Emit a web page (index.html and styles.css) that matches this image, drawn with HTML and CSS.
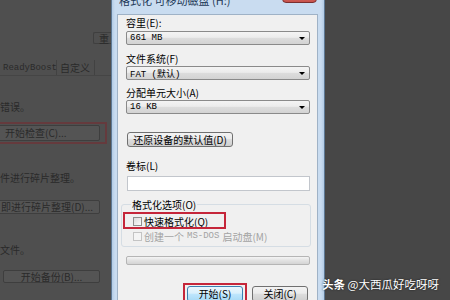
FILE: index.html
```html
<!DOCTYPE html>
<html lang="zh-CN">
<head>
    <meta charset="UTF-8">
    <title>格式化 可移动磁盘</title>
    <link rel="stylesheet" href="styles.css">
</head>
<body>
<div class="stage">

    <div class="behind">
        <div class="bBtnTop">重</div>
        <div class="bTabs">
            <div class="bTab mono">ReadyBoost</div>
            <div class="bTab">自定义</div>
        </div>
        <div class="bText t1">错误。</div>
        <div class="bBtn b1">开始检查(C)...</div>
        <div class="bText t2">件进行碎片整理。</div>
        <div class="bBtn b2">即进行碎片整理(D)...</div>
        <div class="bText t3">文件。</div>
        <div class="bBtn b3">开始备份(B)...</div>
    </div>

    <div class="dialog">
        <div class="titlebar">
            <div class="titleText">格式化 可移动磁盘 (H:)</div>
            <div class="closeBtn"></div>
        </div>
        <div class="panel">
            <div class="label l1">容里(E):</div>
            <div class="combo c1"><span class="mono">661 MB</span><span class="arrow"></span></div>
            <div class="label l2">文件系统(F)</div>
            <div class="combo c2"><span class="mono">FAT (默认)</span><span class="arrow"></span></div>
            <div class="label l3">分配单元大小(A)</div>
            <div class="combo c3"><span class="mono">16 KB</span><span class="arrow"></span></div>
            <div class="btn restore">还原设备的默认值(D)</div>
            <div class="label l4">卷标(L)</div>
            <div class="input"></div>
            <fieldset class="group">
                <legend>格式化选项(O)</legend>
                <div class="check"><span class="box"></span>快速格式化(Q)</div>
                <div class="check off"><span class="box"></span>创建一个 <span class="mono">MS-DOS</span> 启动盘(M)</div>
            </fieldset>
            <div class="progress"></div>
            <div class="actions">
                <div class="btn start">开始(S)</div>
                <div class="btn">关闭(C)</div>
            </div>
        </div>
    </div>

    <div class="rest"></div>

    <div class="mark markLeft"></div>
    <div class="mark markQuick"></div>
    <div class="mark markStart"></div>
    <div class="watermark"><b>头条</b> @大西瓜好吃呀呀</div>
</div>
</body>
</html>
```

FILE: styles.css
```css
*{
    margin:0;
    padding:0;
    box-sizing:border-box;
}

body{
    width:450px;
    height:300px;
    overflow:hidden;
    font-family:"Noto Sans CJK SC","Liberation Sans",sans-serif;
    font-size:10px;
}

.mono{
    font-family:"Liberation Mono","Noto Sans CJK SC",monospace;
    font-size:9px;
}

.stage{
    position:relative;
    display:flex;
    height:300px;
    background:#474747;
}

/* window behind the dialog, dimmed */
.behind{
    width:111px;
    flex-shrink:0;
    background:#4f4f4f;
    color:#2a2a2a;
    overflow:hidden;
    line-height:12px;
}
.bBtnTop{
    margin:32px 0 0 93px;
    width:18px;
    height:12px;
    padding-left:5px;
    border:1px solid #3f3f3f;
    border-right:0;
    border-radius:2px 0 0 2px;
    white-space:nowrap;
}
.bTabs{
    display:flex;
    margin-top:16px;
    height:16px;
    border-bottom:1px solid #454545;
}
.bTab{
    padding:2px 4px 0 3px;
    border-right:1px solid #424242;
    white-space:nowrap;
}
.bTab.mono{
    width:57px;
}
.bText{
    white-space:nowrap;
}
.t1{ margin-top:25px; }
.t2{ margin-top:31px; }
.t3{ margin-top:30px; }

.bBtn{
    margin-left:-5px;
    width:105px;
    border:1px solid #3e3e3e;
    border-radius:2px;
    background:#545454;
    white-space:nowrap;
    padding-left:9px;
}
.b1{ margin-top:12px; height:16px; padding-top:1px; }
.b2{ margin-top:16px; height:14px; padding-left:5px; }
.b3{ margin:14px 0 0 3px; width:97px; height:13px; text-align:center; padding-left:0; }

/* dialog */
.dialog{
    width:214px;
    flex-shrink:0;
    border-left:1px solid #5d7894;
    border-right:1px solid #5d7894;
    background:linear-gradient(90deg,#b3cce6,#c9dcf0 3px,#c9dcf0 calc(100% - 3px),#b3cce6);
    padding:0 6px 0 5px;
}
.titlebar{
    display:flex;
    justify-content:space-between;
    height:14px;
    overflow:hidden;
}
.titleText{
    margin:-6px 0 0 2px;
    font-size:11px;
    line-height:12px;
    color:#1e3957;
    white-space:nowrap;
}
.closeBtn{
    width:35px;
    height:14px;
    margin:-11px 1px 0 0;
    border:1px solid #7b2f2f;
    border-radius:0 0 4px 4px;
    background:linear-gradient(#e0918a,#c75049);
}

.panel{
    height:300px;
    border:1px solid #9fb2c6;
    background:#f0f0f0;
    padding:1px 7px 0 8px;
    color:#000;
}
.label{
    height:13px;
    line-height:13px;
    white-space:nowrap;
}
.l2{ margin-top:7px; }
.l3{ margin-top:6px; }
.l4{ margin-top:12px; }

.combo{
    display:flex;
    align-items:center;
    justify-content:space-between;
    height:14px;
    padding:0 4px 0 3px;
    border:1px solid #8a8a8a;
    border-radius:2px;
    background:linear-gradient(#f4f4f4,#ececec 45%,#dddddd 50%,#d3d3d3);
}
.c1{ margin-top:2px; }
.c2{ margin-top:1px; }
.c3{ margin-top:1px; }
.arrow{
    width:0;
    height:0;
    border-left:3px solid transparent;
    border-right:3px solid transparent;
    border-top:3px solid #000;
}

.btn{
    height:16px;
    line-height:14px;
    text-align:center;
    border:1px solid #707070;
    border-radius:3px;
    background:linear-gradient(#f3f3f3,#ebebeb 45%,#dddddd 50%,#cfcfcf);
    white-space:nowrap;
}
.restore{
    margin:18px 0 0 1px;
    width:106px;
    height:15px;
}

.input{
    margin:4px 0 0 1px;
    width:183px;
    height:15px;
    background:#fff;
    border:1px solid #c2c6cc;
}

.group{
    margin:8px -1px 0 -5px;
    padding:5px 4px 4px 9px;
    border:1px solid #d5dde4;
    border-radius:3px;
}
.group legend{
    padding:0 1px;
    line-height:11px;
}
.check{
    display:flex;
    align-items:center;
    height:12px;
    padding-left:2px;
    white-space:nowrap;
}
.check + .check{
    margin-top:3px;
}
.check .box{
    width:9px;
    height:9px;
    margin-right:2px;
    border:1px solid #8f8f8f;
    background:linear-gradient(135deg,#dcdcdc,#fbfbfb);
}
.check.off{
    color:#a3a3a3;
}
.check.off .box{
    border-color:#c4c4c4;
    background:#f4f4f4;
}
.check.off .mono{
    margin:0 3px;
}

.progress{
    margin-top:9px;
    height:9px;
    border:1px solid #b5b5b5;
    border-radius:2px;
    background:linear-gradient(#f4f4f4,#e2e2e2 50%,#d4d4d4);
}

.actions{
    display:flex;
    justify-content:flex-end;
    gap:9px;
    margin-top:21px;
    padding-right:2px;
}
.actions .btn{
    width:56px;
}
.actions .start{
    border-color:#3c7fb1;
    background:linear-gradient(#eaf6fd,#d9f0fc 45%,#bee6fd 50%,#a7d9f5);
}

.rest{
    flex:1;
}

/* highlights drawn over the screenshot */
.mark{
    position:absolute;
    border:2px solid #c5263a;
}
.markLeft{
    left:-2px;
    top:122px;
    width:109px;
    height:22px;
    border-color:#653a3d;
}
.markQuick{
    left:123px;
    top:212px;
    width:103px;
    height:17px;
}
.markStart{
    left:183px;
    top:283px;
    width:64px;
    height:22px;
}

.watermark{
    position:absolute;
    left:322px;
    top:276px;
    color:#fff;
    font-size:11.5px;
    line-height:16px;
    white-space:nowrap;
    text-shadow:0 0 2px rgba(0,0,0,.7);
}
.watermark b{
    font-weight:700;
}
```
